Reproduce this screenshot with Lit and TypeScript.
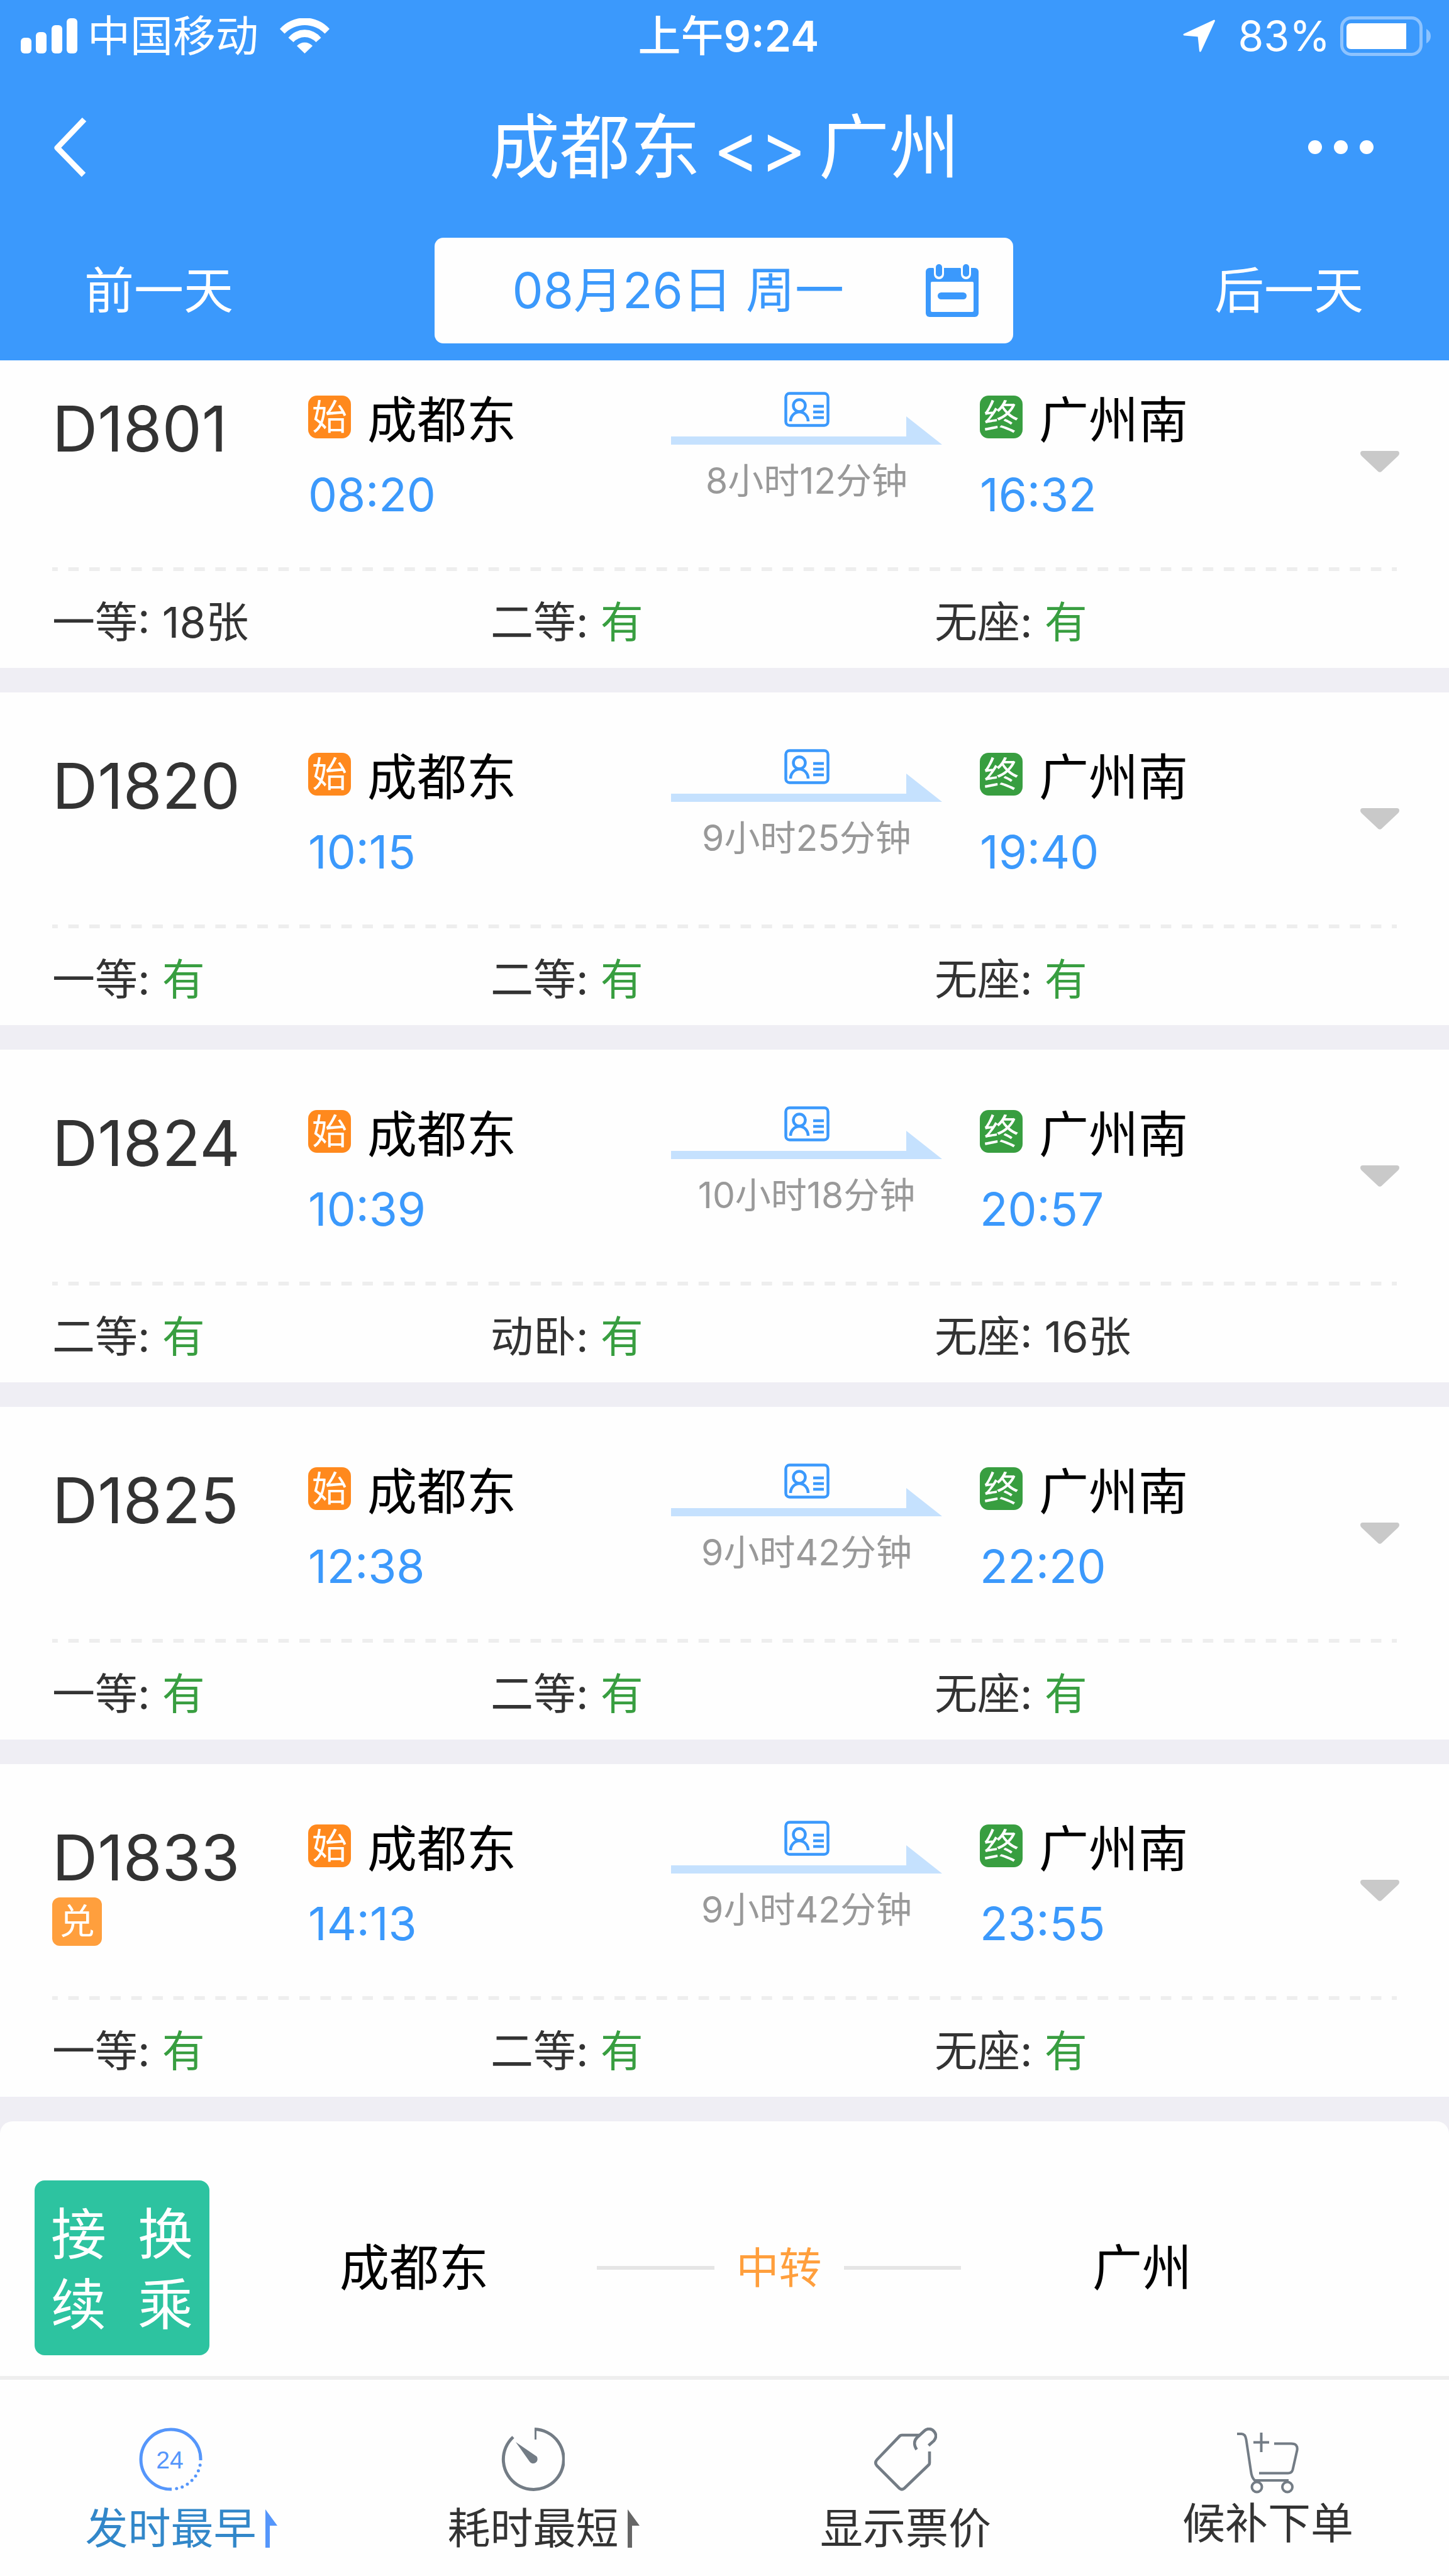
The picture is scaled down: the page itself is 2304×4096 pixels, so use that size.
import { LitElement, html, svg, css, nothing } from "lit";
import { customElement, property } from "lit/decorators.js";

interface Seat {
  name: string;
  stock: string;
}

interface Train {
  no: string;
  redeem?: boolean;
  from: string;
  depart: string;
  to: string;
  arrive: string;
  duration: string;
  seats: Seat[];
}

const seat = (name: string, stock = "有"): Seat => ({ name, stock });

const trains: Train[] = [
  {
    no: "D1801", from: "成都东", depart: "08:20", to: "广州南", arrive: "16:32",
    duration: "8小时12分钟", seats: [seat("一等", "18张"), seat("二等"), seat("无座")],
  },
  {
    no: "D1820", from: "成都东", depart: "10:15", to: "广州南", arrive: "19:40",
    duration: "9小时25分钟", seats: [seat("一等"), seat("二等"), seat("无座")],
  },
  {
    no: "D1824", from: "成都东", depart: "10:39", to: "广州南", arrive: "20:57",
    duration: "10小时18分钟", seats: [seat("二等"), seat("动卧"), seat("无座", "16张")],
  },
  {
    no: "D1825", from: "成都东", depart: "12:38", to: "广州南", arrive: "22:20",
    duration: "9小时42分钟", seats: [seat("一等"), seat("二等"), seat("无座")],
  },
  {
    no: "D1833", redeem: true, from: "成都东", depart: "14:13", to: "广州南", arrive: "23:55",
    duration: "9小时42分钟", seats: [seat("一等"), seat("二等"), seat("无座")],
  },
];

const reset = css`
  :host {
    display: block;
    font-family: Inter, "Noto Sans CJK SC", sans-serif;
  }
  * {
    box-sizing: border-box;
  }
  svg {
    display: block;
    flex: none;
  }
  button {
    appearance: none;
    margin: 0;
    padding: 0;
    border: 0;
    background: none;
    color: inherit;
    font: inherit;
    text-align: left;
    white-space: nowrap;
  }
`;

@customElement("phone-status")
class PhoneStatus extends LitElement {
  static styles = [
    reset,
    css`
      .bar {
        display: grid;
        grid-template-columns: 1fr auto 1fr;
        align-items: center;
        height: 114px;
        padding: 0 28px 0 33px;
        font-size: 68px;
        line-height: 80px;
        color: #fff;
        white-space: nowrap;
      }
      .side {
        display: flex;
        align-items: center;
      }
      .carrier {
        margin: 0 34px 0 16px;
      }
      .clock {
        padding-left: 8px;
        font-weight: 500;
      }
      .digits {
        font-weight: 600;
      }
      .right {
        justify-content: flex-end;
      }
      .level {
        margin: 0 16px 0 36px;
        font-size: 66px;
      }
    `,
  ];

  render() {
    return html`
      <div class="bar">
        <div class="side">
          <svg width="90" height="56" viewBox="0 0 90 56" fill="#fff" aria-hidden="true">
            <rect x="0" y="31" width="17" height="25" rx="6" />
            <rect x="24" y="22" width="17" height="34" rx="6" />
            <rect x="49" y="11" width="17" height="45" rx="6" />
            <rect x="73" y="0" width="17" height="56" rx="6" />
          </svg>
          <span class="carrier">中国移动</span>
          <svg width="79" height="56" viewBox="0 0 79 56" fill="#fff" aria-hidden="true">
            <path d="M0 17A53 53 0 0 1 79 17L71.500 24.500A44.700 44.700 0 0 0 7.500 24.500Z" />
            <path d="M13.500 31A33 33 0 0 1 65.500 31L57.500 38A24.500 24.500 0 0 0 21.500 38Z" />
            <path d="M27 44A17 17 0 0 1 52 44L39.500 56Z" />
          </svg>
        </div>
        <span class="clock">上午<span class="digits">9:24</span></span>
        <div class="side right">
          <svg width="52" height="52" viewBox="0 0 52 52" fill="#fff" stroke="#fff" stroke-width="3" stroke-linejoin="round" aria-hidden="true">
            <path d="M49.500 2L2 24L25 26L27.500 50Z" />
          </svg>
          <span class="level">83%</span>
          <svg width="145" height="63" viewBox="0 0 145 63" aria-hidden="true">
            <rect x="2.500" y="2.500" width="126" height="58" rx="15" fill="none" stroke="#8dc3fe" stroke-width="5" />
            <path d="M17 11H105V52H17Q10 52 10 45V18Q10 11 17 11Z" fill="#fff" />
            <path d="M137 20Q144 24 144 31.500T137 43Z" fill="#8dc3fe" />
          </svg>
        </div>
      </div>
    `;
  }
}

@customElement("page-header")
class PageHeader extends LitElement {
  static styles = [
    reset,
    css`
      .header {
        background: #3b99fc;
        color: #fff;
      }
      .title-row {
        display: grid;
        grid-template-columns: 1fr auto 1fr;
        align-items: center;
        height: 240px;
        padding: 0 120px 0 83px;
      }
      .title-row > :last-child {
        justify-self: end;
      }
      h1 {
        display: flex;
        gap: 20px;
        margin: 0;
        padding-left: 37px;
        font-size: 112px;
        line-height: 128px;
        font-weight: 400;
        white-space: nowrap;
      }
      .date-row {
        display: grid;
        grid-template-columns: 556fr 920fr 556fr;
        align-items: center;
        padding: 24px 136px 27px 134px;
        font-size: 79px;
        line-height: 96px;
      }
      .date-row > :last-child {
        justify-self: end;
      }
      .date {
        display: flex;
        align-items: center;
        justify-content: space-between;
        height: 168px;
        padding: 0 55px 0 124px;
        border-radius: 14px;
        background: #fefefe;
        color: #3b99fc;
        font-size: 78px;
      }
    `,
  ];

  render() {
    return html`
      <header class="header">
        <phone-status></phone-status>
        <div class="title-row">
          <button aria-label="返回">
            <svg width="56" height="96" viewBox="0 0 56 96" fill="none" stroke="#fff" stroke-width="9" aria-hidden="true">
              <path d="M51 4L8 49L50 92" stroke-linejoin="round" />
            </svg>
          </button>
          <h1><span>成都东</span><span>&lt;&gt;</span><span>广州</span></h1>
          <button aria-label="更多">
            <svg width="104" height="24" viewBox="0 0 104 24" fill="#fff" aria-hidden="true">
              <circle cx="11" cy="12" r="11" />
              <circle cx="52" cy="12" r="11" />
              <circle cx="93" cy="12" r="11" />
            </svg>
          </button>
        </div>
        <div class="date-row">
          <button>前一天</button>
          <button class="date">
            <span>08月26日 周一</span>
            <svg width="84" height="84" viewBox="0 0 84 84" aria-hidden="true">
              <rect x="0" y="6" width="84" height="78" rx="6" fill="#3b99fc" />
              <rect x="8" y="28" width="68" height="48" rx="2" fill="#fefefe" />
              <rect x="19" y="45" width="46" height="11" rx="5.500" fill="#3b99fc" />
              <path d="M12 5H29V16A8 8 0 0 1 13 16V8Z" fill="#fefefe" />
              <path d="M55 5H72V16A8 8 0 0 1 56 16V8Z" fill="#fefefe" />
              <rect x="16" y="0" width="10" height="20" rx="5" fill="#3b99fc" />
              <rect x="59" y="0" width="10" height="20" rx="5" fill="#3b99fc" />
            </svg>
          </button>
          <button>后一天</button>
        </div>
      </header>
    `;
  }
}

@customElement("train-card")
class TrainCard extends LitElement {
  @property({ attribute: false }) train!: Train;
  @property({ type: Boolean, reflect: true }) tucked = false;

  static styles = [
    reset,
    css`
      .card {
        background: #fefefe;
      }
      .trip {
        display: grid;
        grid-template-columns: 407fr 577fr 491fr 605fr 62px;
        padding: 90px 79px 75px 83px;
      }
      :host([tucked]) .trip {
        padding-top: 50px;
      }
      h2 {
        margin: 0;
        font-size: 100px;
        line-height: 118px;
        font-weight: 400;
        color: #333;
      }
      .redeem {
        display: block;
        width: 79px;
        height: 77px;
        margin-top: 4px;
        border-radius: 12px;
        background: #ff9f3d;
        color: #fff;
        font-size: 56px;
        line-height: 77px;
        text-align: center;
      }
      .station {
        display: flex;
        align-items: center;
        gap: 26px;
        height: 80px;
        font-family: "Noto Sans CJK SC", sans-serif;
        font-size: 79px;
        line-height: 80px;
        color: #000;
        white-space: nowrap;
      }
      .mark {
        width: 68px;
        height: 68px;
        border-radius: 14px;
        background: #ff891d;
        color: #fff;
        font-family: Inter, "Noto Sans CJK SC", sans-serif;
        font-size: 56px;
        line-height: 68px;
        text-align: center;
      }
      .mark.end {
        background: #389e40;
      }
      time {
        display: block;
        margin-top: 44px;
        font-size: 73px;
        line-height: 80px;
        color: #3b99fc;
      }
      .route {
        width: 431px;
      }
      .duration {
        margin-top: 28px;
        font-size: 57px;
        line-height: 60px;
        color: #999;
        text-align: center;
        white-space: nowrap;
      }
      .more {
        align-self: center;
        padding-top: 18px;
      }
      .rule {
        height: 6px;
        margin: 0 83px;
        background: linear-gradient(90deg, #eee 25%, transparent 25% 75%, #eee 75%) 0 0 / calc(100% / 64) 6px;
      }
      .seats {
        display: grid;
        grid-template-columns: 697fr 706fr 735fr;
        margin: 0;
        padding: 41px 83px 33px;
        font-size: 68px;
        line-height: 80px;
        color: #333;
        white-space: nowrap;
      }
      .plenty {
        color: #389e40;
      }
    `,
  ];

  private stop(mark: string, kind: string, name: string, time: string) {
    return html`
      <div>
        <div class="station"><span class="mark ${kind}">${mark}</span>${name}</div>
        <time>${time}</time>
      </div>
    `;
  }

  render() {
    const t = this.train;
    return html`
      <article class="card">
        <div class="trip">
          <div>
            <h2>${t.no}</h2>
            ${t.redeem ? html`<span class="redeem">兑</span>` : nothing}
          </div>
          ${this.stop("始", "start", t.from, t.depart)}
          <div class="route">
            <svg width="431" height="84" viewBox="0 0 431 84" aria-hidden="true">
              <path d="M0 71H374V39L431 84H0Z" fill="#c5e1fe" />
              <g transform="translate(180 0)" fill="none" stroke="#3b99fc" stroke-width="4.500">
                <rect x="2.500" y="2.500" width="67" height="51" rx="6" />
                <circle cx="24" cy="22" r="9.500" />
                <path d="M10 47C10 39 16 32 24 32S38 39 38 47M46 23H63M46 32H63M46 41H63" />
              </g>
            </svg>
            <div class="duration">${t.duration}</div>
          </div>
          ${this.stop("终", "end", t.to, t.arrive)}
          <button class="more" aria-label="展开">
            <svg width="62" height="34" viewBox="0 0 62 34" fill="#c9c9c9" aria-hidden="true">
              <path d="M4 0H58Q62 0 62 4Q62 6 60 8L34 32.500Q31 35 28 32.500L2 8Q0 6 0 4Q0 0 4 0Z" />
            </svg>
          </button>
        </div>
        <div class="rule"></div>
        <div class="seats">
          ${t.seats.map(
            (s) => html`<span>${s.name}: <span class=${s.stock === "有" ? "plenty" : "count"}>${s.stock}</span></span>`
          )}
        </div>
      </article>
    `;
  }
}

@customElement("transfer-card")
class TransferCard extends LitElement {
  static styles = [
    reset,
    css`
      .card {
        display: grid;
        grid-template-columns: 485fr 409fr 579fr 209fr 512fr;
        align-items: center;
        padding: 94px 55px 33px;
        border-radius: 20px 20px 0 0;
        background: #fefefe;
        font-size: 79px;
        line-height: 96px;
        color: #000;
        white-space: nowrap;
      }
      .tile {
        display: grid;
        grid-template-columns: 88px 88px;
        grid-auto-rows: 112px;
        justify-content: center;
        align-content: center;
        column-gap: 50px;
        width: 278px;
        height: 278px;
        padding-top: 4px;
        border-radius: 16px;
        background: #2dc3a0;
        color: #fff;
        font-size: 88px;
        line-height: 112px;
      }
      .via {
        display: flex;
        align-items: center;
        gap: 35px;
        font-size: 68px;
        color: #ff9f3d;
      }
      .via::before,
      .via::after {
        content: "";
        flex: 1;
        height: 6px;
        background: #e5e5e5;
      }
      .to {
        grid-column: 5;
      }
    `,
  ];

  render() {
    return html`
      <section class="card">
        <div class="tile"><span>接</span><span>换</span><span>续</span><span>乘</span></div>
        <span>成都东</span>
        <span class="via">中转</span>
        <span class="to">广州</span>
      </section>
    `;
  }
}

const dots = [1, 2, 3, 4, 5, 6, 7].map((i) => {
  const a = (i * Math.PI) / 16;
  return svg`<circle cx=${(50.5 + 47.5 * Math.cos(a)).toFixed(1)} cy=${(50.5 + 47.5 * Math.sin(a)).toFixed(1)} r="2.500" fill="#5596fb" />`;
});

const clockIcon = html`
  <svg class="icon" width="101" height="101" viewBox="0 0 101 101" aria-hidden="true">
    <path d="M98 52A47.500 47.500 0 1 0 52 98" fill="none" stroke="#5596fb" stroke-width="5" />
    ${dots}
    <text class="hours" x="49" y="65" text-anchor="middle" fill="#5596fb">24</text>
  </svg>
`;

const gaugeIcon = html`
  <svg class="icon" width="101" height="101" viewBox="0 0 101 101" fill="none" stroke="#737c85" aria-hidden="true">
    <path d="M53 2.500A48 48 0 1 1 19 15" stroke-width="5" />
    <path d="M54.500 2V19" stroke-width="3" />
    <path d="M23 23L56.500 46A7 7 0 1 1 45 54Z" fill="#737c85" stroke="none" />
  </svg>
`;

const tagIcon = html`
  <svg class="icon" width="101" height="101" viewBox="0 0 101 101" fill="none" stroke="#737c85" stroke-width="4.600" aria-hidden="true">
    <path d="M73 12H45Q43 12 42 13L5.500 51Q1 56 5.500 61L41 96.500Q45 100 49 96.500L88 59Q89 58 89 56V38" />
    <path d="M68.500 35C64 28 64 21 69 16L81 5C85 1 92 1 96 6C100 10 100 16 96 21L87.500 28.500" />
  </svg>
`;

const cartIcon = html`
  <svg class="icon" width="98" height="98" viewBox="0 0 98 98" fill="none" stroke="#737c85" stroke-width="4" aria-hidden="true">
    <path d="M0 3H7Q13 3 14.500 12L22 62Q23 72 28 77H82" />
    <path d="M38.500 1V32M26 16.500H51" />
    <path d="M59 18.500H86Q97 18.500 95.500 29L88.500 60Q87 65.500 81 65.500H35" />
    <circle cx="31.500" cy="87.500" r="8" />
    <circle cx="80" cy="87.500" r="8" />
  </svg>
`;

@customElement("sort-tabs")
class SortTabs extends LitElement {
  static styles = [
    reset,
    css`
      .tabs {
        display: grid;
        grid-template-columns: repeat(4, 1fr);
        border-top: 6px solid #eee;
        background: #fefefe;
      }
      .tab {
        display: grid;
        grid-template-columns: auto;
        justify-content: center;
        justify-items: center;
        align-content: start;
        row-gap: 19px;
        padding: 76px 0 36px;
        font-size: 68px;
        line-height: 80px;
        color: #333;
      }
      .icon,
      .label {
        grid-column: 1;
      }
      .tab.sort {
        grid-template-columns: auto 19px;
        column-gap: 14px;
      }
      .flag {
        grid-column: 2;
        grid-row: 2;
        align-self: center;
        fill: #666;
      }
      .tab.active {
        color: #3287c9;
      }
      .tab.active .flag {
        fill: #5596fb;
      }
      .tab.compact {
        row-gap: 7px;
        padding-top: 83px;
      }
      .hours {
        font-family: "Liberation Sans", sans-serif;
        font-size: 39px;
      }
    `,
  ];

  private flag() {
    return html`
      <svg class="flag" width="19" height="61" viewBox="0 0 19 61" aria-hidden="true">
        <path d="M0 0L19 26H7V61H0Z" />
      </svg>
    `;
  }

  render() {
    return html`
      <nav class="tabs">
        <button class="tab sort active">${clockIcon}<span class="label">发时最早</span>${this.flag()}</button>
        <button class="tab sort">${gaugeIcon}<span class="label">耗时最短</span>${this.flag()}</button>
        <button class="tab">${tagIcon}<span class="label">显示票价</span></button>
        <button class="tab compact">${cartIcon}<span class="label">候补下单</span></button>
      </nav>
    `;
  }
}

@customElement("app-root")
class AppRoot extends LitElement {
  static styles = [
    reset,
    css`
      .list {
        display: flex;
        flex-direction: column;
        gap: 39px;
        background: #efeef4;
      }
    `,
  ];

  render() {
    return html`
      <page-header></page-header>
      <main class="list">
        ${trains.map((t, i) => html`<train-card .train=${t} ?tucked=${i === 0}></train-card>`)}
        <transfer-card></transfer-card>
      </main>
      <sort-tabs></sort-tabs>
    `;
  }
}
